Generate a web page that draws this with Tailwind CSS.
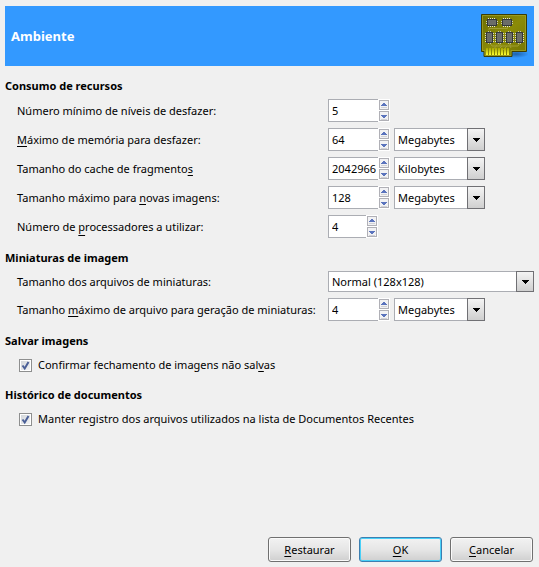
<!DOCTYPE html>
<html lang="pt-BR">
<head>
<meta charset="utf-8">
<meta name="viewport" content="width=device-width, initial-scale=1">
<title>Preferências - Ambiente</title>
<script src="https://cdn.jsdelivr.net/npm/@tailwindcss/browser@4"></script>
</head>
<body class="bg-[#f0f0f0] text-black text-[11px] leading-[18px] font-['Noto_Sans','Open_Sans',sans-serif]">
<svg class="hidden" aria-hidden="true">
  <symbol id="up" viewBox="0 0 8 8"><path d="M3 2h2v1h1v1h1v1H1V4h1V3h1z" fill="#5b74bd"/><path d="M1 6h6v1H1z" fill="#d2d2d6"/></symbol>
  <symbol id="down" viewBox="0 0 8 8"><path d="M1 3h6v1H6v1H5v1H3V5H2V4H1z" fill="#5b74bd"/><path d="M1 7h6v1H1z" fill="#d2d2d6"/></symbol>
  <symbol id="drop" viewBox="0 0 7 4"><path d="M0 0h7v1H6v1H5v1H4v1H3V3H2V2H1V1H0z" fill="#000"/></symbol>
</svg>
<form class="min-h-screen flex flex-col px-[5px] pt-[6px] pb-[5px]">
  <header class="flex items-center justify-between bg-[#3399ff] h-[60px] px-[6px]">
    <h1 class="text-white font-bold text-[13px]">Ambiente</h1>
    <svg class="size-12" viewBox="0 0 48 48" aria-hidden="true">
      <defs>
        <linearGradient id="pcb" x1="0" y1="0" x2="1" y2="1"><stop offset="0" stop-color="#6a6c02"/><stop offset=".5" stop-color="#8b8b08"/><stop offset="1" stop-color="#727402"/></linearGradient>
        <linearGradient id="gold" x1="0" y1="0" x2="0" y2="1"><stop offset="0" stop-color="#a5a500"/><stop offset="1" stop-color="#ffff30"/></linearGradient>
        <radialGradient id="shade"><stop offset="0" stop-color="#123c70" stop-opacity=".6"/><stop offset="1" stop-color="#123c70" stop-opacity="0"/></radialGradient>
        <g id="chip">
          <path d="M2.500 0v9M4.500 0v9M6.500 0v9M8.500 0v9" stroke="#e4e4d8"/>
          <path d="M0 3.500h12M0 5.500h12" stroke="#d0d0bc"/>
          <rect x="1.500" y="1.500" width="9" height="6" fill="#6b6d69" stroke="#34383a"/>
        </g>
        <g id="chipv">
          <path d="M0 2.500h9M0 4.500h9M0 6.500h9M0 8.500h9M0 10.500h9" stroke="#dcdccc"/>
          <path d="M3.500 0v13M5.500 0v13" stroke="#c4c4ac"/>
          <rect x="1.500" y="1.500" width="6" height="10" fill="#6b6d69" stroke="#34383a"/>
        </g>
      </defs>
      <ellipse cx="36" cy="42" rx="13" ry="4" fill="url(#shade)"/>
      <path d="M1.500 2.500h45v37h-14.500v5h-28v-5h-2.500z" fill="url(#pcb)" stroke="#3b3d04"/>
      <path d="M2.500 3.500h43v35h-14.500v5h-26v-5h-2.500z" fill="none" stroke="#a4a52b" stroke-opacity=".7"/>
      <path d="M9 18v-1.500h18.500V14M10 31l2 3h18l1 2M20 31v3M30 31v3M40 31l-2 3h-8M13 38l4-5M18 38l4-4M23 38l4-4" fill="none" stroke="#a09c33"/>
      <path d="M6 36h2v7H6zM9 36h2v7H9zM12 36h2v7h-2zM15 36h2v7h-2zM18 36h2v7h-2zM21 36h2v7h-2zM24 36h2v7h-2zM27 36h2v7h-2z" fill="url(#gold)"/>
      <use href="#chip" x="6" y="6"/><use href="#chip" x="21" y="6"/>
      <use href="#chipv" x="5" y="19"/><use href="#chipv" x="15" y="19"/><use href="#chipv" x="25" y="19"/><use href="#chipv" x="35" y="19"/>
    </svg>
  </header>

  <section class="pt-[11px]">
    <h2 class="font-bold">Consumo de recursos</h2>
    <div class="grid grid-cols-[311px_1fr] gap-y-[6px] items-center pl-3 pt-1 whitespace-nowrap">
      <label for="undo">Número mínimo de níveis de desfazer:</label>
      <div class="flex h-[23px]">
        <input id="undo" value="5" class="w-[50px] bg-white border border-r-0 border-[#abadb3] pl-[3px]">
        <span class="flex flex-col bg-white p-px gap-px"><button type="button" aria-label="Aumentar" class="flex-1 w-[10px] border border-[#b0b0b6] bg-[#f2f2f4]"><svg class="block size-2"><use href="#up"/></svg></button><button type="button" aria-label="Diminuir" class="flex-1 w-[10px] border border-[#b0b0b6] bg-[#f2f2f4]"><svg class="block size-2"><use href="#down"/></svg></button></span>
      </div>
      <label for="undomem"><u class="underline-offset-2">M</u>áximo de memória para desfazer:</label>
      <div class="flex h-[23px]">
        <input id="undomem" value="64" class="w-[50px] bg-white border border-r-0 border-[#abadb3] pl-[3px]">
        <span class="flex flex-col bg-white p-px gap-px"><button type="button" aria-label="Aumentar" class="flex-1 w-[10px] border border-[#b0b0b6] bg-[#f2f2f4]"><svg class="block size-2"><use href="#up"/></svg></button><button type="button" aria-label="Diminuir" class="flex-1 w-[10px] border border-[#b0b0b6] bg-[#f2f2f4]"><svg class="block size-2"><use href="#down"/></svg></button></span>
        <span class="relative ml-1 w-[91px]"><select aria-label="Unidade da memória" class="appearance-none size-full bg-white border border-[#abadb3] pl-[3px]"><option>Megabytes</option><option>Kilobytes</option></select><span class="pointer-events-none absolute right-0 inset-y-0 w-[18px] border border-[#707074] bg-linear-to-b from-[#f4f4f4] to-[#cfcfcf] flex items-center justify-center"><svg class="w-[7px] h-1"><use href="#drop"/></svg></span></span>
      </div>
      <label for="cache">Tamanho do cache de fragmento<u class="underline-offset-2">s</u></label>
      <div class="flex h-[23px]">
        <input id="cache" value="2042966" class="w-[50px] bg-white border border-r-0 border-[#abadb3] pl-[3px]">
        <span class="flex flex-col bg-white p-px gap-px"><button type="button" aria-label="Aumentar" class="flex-1 w-[10px] border border-[#b0b0b6] bg-[#f2f2f4]"><svg class="block size-2"><use href="#up"/></svg></button><button type="button" aria-label="Diminuir" class="flex-1 w-[10px] border border-[#b0b0b6] bg-[#f2f2f4]"><svg class="block size-2"><use href="#down"/></svg></button></span>
        <span class="relative ml-1 w-[91px]"><select aria-label="Unidade do cache" class="appearance-none size-full bg-white border border-[#abadb3] pl-[3px]"><option>Kilobytes</option><option>Megabytes</option></select><span class="pointer-events-none absolute right-0 inset-y-0 w-[18px] border border-[#707074] bg-linear-to-b from-[#f4f4f4] to-[#cfcfcf] flex items-center justify-center"><svg class="w-[7px] h-1"><use href="#drop"/></svg></span></span>
      </div>
      <label for="newimg">Tamanho máximo para <u class="underline-offset-2">n</u>ovas imagens:</label>
      <div class="flex h-[23px]">
        <input id="newimg" value="128" class="w-[50px] bg-white border border-r-0 border-[#abadb3] pl-[3px]">
        <span class="flex flex-col bg-white p-px gap-px"><button type="button" aria-label="Aumentar" class="flex-1 w-[10px] border border-[#b0b0b6] bg-[#f2f2f4]"><svg class="block size-2"><use href="#up"/></svg></button><button type="button" aria-label="Diminuir" class="flex-1 w-[10px] border border-[#b0b0b6] bg-[#f2f2f4]"><svg class="block size-2"><use href="#down"/></svg></button></span>
        <span class="relative ml-1 w-[91px]"><select aria-label="Unidade de novas imagens" class="appearance-none size-full bg-white border border-[#abadb3] pl-[3px]"><option>Megabytes</option><option>Kilobytes</option></select><span class="pointer-events-none absolute right-0 inset-y-0 w-[18px] border border-[#707074] bg-linear-to-b from-[#f4f4f4] to-[#cfcfcf] flex items-center justify-center"><svg class="w-[7px] h-1"><use href="#drop"/></svg></span></span>
      </div>
      <label for="cpus">Número de <u class="underline-offset-4">p</u>rocessadores a utilizar:</label>
      <div class="flex h-[23px]">
        <input id="cpus" value="4" class="w-[38px] bg-white border border-r-0 border-[#abadb3] pl-[3px]">
        <span class="flex flex-col bg-white p-px gap-px"><button type="button" aria-label="Aumentar" class="flex-1 w-[10px] border border-[#b0b0b6] bg-[#f2f2f4]"><svg class="block size-2"><use href="#up"/></svg></button><button type="button" aria-label="Diminuir" class="flex-1 w-[10px] border border-[#b0b0b6] bg-[#f2f2f4]"><svg class="block size-2"><use href="#down"/></svg></button></span>
      </div>
    </div>
  </section>

  <section class="pt-[11px]">
    <h2 class="font-bold">Miniaturas de imagem</h2>
    <div class="grid grid-cols-[311px_1fr] gap-y-[6px] items-center pl-3 pt-1 whitespace-nowrap">
      <label for="thumb">Tamanho dos arquivos de miniaturas:</label>
      <span class="relative h-[21px]"><select id="thumb" class="appearance-none size-full bg-white border border-[#abadb3] pl-[3px]"><option>Normal (128x128)</option></select><span class="pointer-events-none absolute right-0 inset-y-0 w-[18px] border border-[#707074] bg-linear-to-b from-[#f4f4f4] to-[#cfcfcf] flex items-center justify-center"><svg class="w-[7px] h-1"><use href="#drop"/></svg></span></span>
      <label for="thumbmax">Tamanho <u class="underline-offset-2">m</u>áximo de arquivo para geração de miniaturas:</label>
      <div class="flex h-[23px]">
        <input id="thumbmax" value="4" class="w-[50px] bg-white border border-r-0 border-[#abadb3] pl-[3px]">
        <span class="flex flex-col bg-white p-px gap-px"><button type="button" aria-label="Aumentar" class="flex-1 w-[10px] border border-[#b0b0b6] bg-[#f2f2f4]"><svg class="block size-2"><use href="#up"/></svg></button><button type="button" aria-label="Diminuir" class="flex-1 w-[10px] border border-[#b0b0b6] bg-[#f2f2f4]"><svg class="block size-2"><use href="#down"/></svg></button></span>
        <span class="relative ml-1 w-[91px]"><select aria-label="Unidade do arquivo" class="appearance-none size-full bg-white border border-[#abadb3] pl-[3px]"><option>Megabytes</option><option>Kilobytes</option></select><span class="pointer-events-none absolute right-0 inset-y-0 w-[18px] border border-[#707074] bg-linear-to-b from-[#f4f4f4] to-[#cfcfcf] flex items-center justify-center"><svg class="w-[7px] h-1"><use href="#drop"/></svg></span></span>
      </div>
    </div>
  </section>

  <section class="pt-[11px]">
    <h2 class="font-bold">Salvar imagens</h2>
    <label class="flex items-center gap-[6px] pl-[14px] pt-[6px]">
      <span class="relative size-[13px]"><input type="checkbox" checked class="peer appearance-none block size-[13px] border border-[#8e8f8f] bg-linear-to-br from-[#cfd3d8] to-[#f6f6f6] outline outline-1 -outline-offset-2 outline-white"><svg class="hidden peer-checked:block pointer-events-none absolute inset-0" viewBox="0 0 13 13"><path d="M3.500 6.500l2.200 3L9.500 3" fill="none" stroke="#4a5f97" stroke-width="2"/></svg></span>
      <span>Confirmar fechamento de imagens não sal<u class="underline-offset-2">v</u>as</span>
    </label>
  </section>

  <section class="pt-3">
    <h2 class="font-bold">Histórico de documentos</h2>
    <label class="flex items-center gap-[6px] pl-[14px] pt-[6px]">
      <span class="relative size-[13px]"><input type="checkbox" checked class="peer appearance-none block size-[13px] border border-[#8e8f8f] bg-linear-to-br from-[#cfd3d8] to-[#f6f6f6] outline outline-1 -outline-offset-2 outline-white"><svg class="hidden peer-checked:block pointer-events-none absolute inset-0" viewBox="0 0 13 13"><path d="M3.500 6.500l2.200 3L9.500 3" fill="none" stroke="#4a5f97" stroke-width="2"/></svg></span>
      <span>Manter registro dos arquivos utilizados na lista de Documentos Recentes</span>
    </label>
  </section>

  <footer class="mt-auto pt-4 pr-px flex justify-end gap-2">
    <button type="button" class="w-[83px] h-[25px] rounded-[3px] border border-[#707070] bg-linear-to-b from-[#f2f2f2] via-[#e6e6e6] to-[#cfcfcf] shadow-[inset_0_0_0_1px_#fafafa]"><u class="underline-offset-2">R</u>estaurar</button>
    <button type="submit" class="w-[83px] h-[25px] rounded-[3px] border border-[#3c7fb1] bg-linear-to-b from-[#f2f2f2] via-[#e6e6e6] to-[#cfcfcf] shadow-[inset_0_0_0_1px_#48d0f8]"><u class="underline-offset-2">O</u>K</button>
    <button type="button" class="w-[83px] h-[25px] rounded-[3px] border border-[#707070] bg-linear-to-b from-[#f2f2f2] via-[#e6e6e6] to-[#cfcfcf] shadow-[inset_0_0_0_1px_#fafafa]"><u class="underline-offset-2">C</u>ancelar</button>
  </footer>
</form>
</body>
</html>
